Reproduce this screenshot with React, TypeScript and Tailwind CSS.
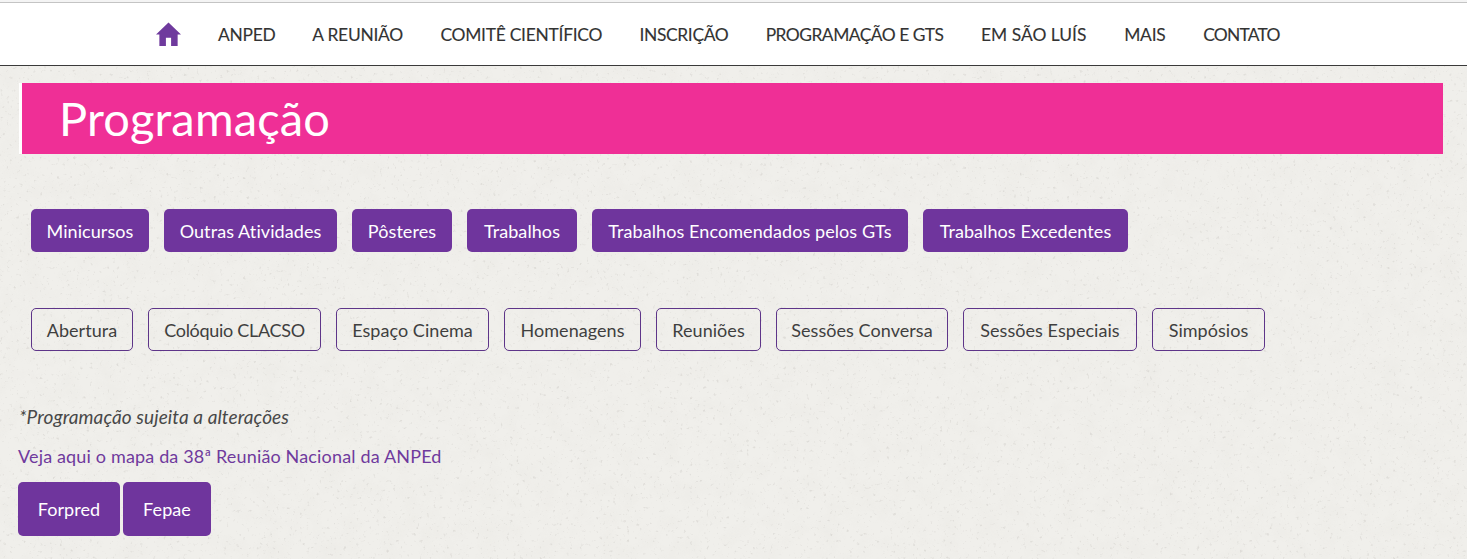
import React from 'react';

const navItems = [
  { label: 'ANPED', cls: 'w-[57px] tracking-[-0.25px]' },
  { label: 'A REUNIÃO', cls: 'w-[91px] tracking-[-0.25px]' },
  { label: 'COMITÊ CIENTÍFICO', cls: 'w-[162px] tracking-[-0.25px]' },
  { label: 'INSCRIÇÃO', cls: 'w-[89px] tracking-[-0.35px]' },
  { label: 'PROGRAMAÇÃO E GTS', cls: 'w-[178px] tracking-[-0.5px]' },
  { label: 'EM SÃO LUÍS', cls: 'w-[106px] tracking-[0px]' },
  { label: 'MAIS', cls: 'w-[42px] tracking-[-0.25px]' },
  { label: 'CONTATO', cls: 'w-[77px] tracking-[-0.75px]' },
];

const solidButtons = [
  { label: 'Minicursos', width: 'w-[118px]' },
  { label: 'Outras Atividades', width: 'w-[173px]' },
  { label: 'Pôsteres', width: 'w-[100px]' },
  { label: 'Trabalhos', width: 'w-[110px]' },
  { label: 'Trabalhos Encomendados pelos GTs', width: 'w-[316px]' },
  { label: 'Trabalhos Excedentes', width: 'w-[205px]' },
];

const outlineButtons = [
  { label: 'Abertura', cls: 'w-[102px] tracking-[0.05px]' },
  { label: 'Colóquio CLACSO', cls: 'w-[173px] tracking-[-0.3px]' },
  { label: 'Espaço Cinema', cls: 'w-[153px] tracking-[0.05px]' },
  { label: 'Homenagens', cls: 'w-[137px] tracking-[0.05px]' },
  { label: 'Reuniões', cls: 'w-[105px] tracking-[0.05px]' },
  { label: 'Sessões Conversa', cls: 'w-[172px] tracking-[0.05px]' },
  { label: 'Sessões Especiais', cls: 'w-[174px] tracking-[0.05px]' },
  { label: 'Simpósios', cls: 'w-[113px] tracking-[0.05px]' },
];

// paper grain behind the page: soft blotches plus sparse specks
function Paper() {
  return (
    <svg className="absolute inset-0 h-full w-full" aria-hidden="true">
      <filter id="blotch">
        <feTurbulence type="fractalNoise" baseFrequency="0.05" numOctaves="3" seed="4" />
        <feColorMatrix values="0 0 0 0 0.70  0 0 0 0 0.68  0 0 0 0 0.64  0 0 0 1.4 -0.55" />
      </filter>
      <filter id="specks">
        <feTurbulence type="fractalNoise" baseFrequency="0.3" numOctaves="2" seed="11" />
        <feColorMatrix values="0 0 0 0 0.5  0 0 0 0 0.48  0 0 0 0 0.45  0 0 0 5 -3.25" />
      </filter>
      <rect width="100%" height="100%" filter="url(#blotch)" opacity="0.16" />
      <rect width="100%" height="100%" filter="url(#specks)" opacity="0.3" />
    </svg>
  );
}

export default function App() {
  return (
    <div className="relative h-[559px] w-[1467px] overflow-hidden bg-[#f0efeb] font-['Lato',sans-serif] text-[18px] text-[#3f3f3f]">
      <Paper />
      <div className="relative">
        <div className="h-[2px] bg-[#f4f4f4]" />
        <header className="flex h-[64px] items-center border-t border-b border-t-[#c4c4c4] border-b-[#3a3a3a] bg-white pl-[156px]">
          <svg viewBox="0 0 26 25" className="mr-[37px] h-[25px] w-[25px] fill-[#6f3a9d]">
            <path d="M13 0 L26 12.5 L22.5 12.5 L22.5 24.5 L15.7 24.5 L15.7 16 L10.3 16 L10.3 24.5 L3.5 24.5 L3.5 12.5 L0 12.5 Z" />
          </svg>
          <nav className="flex gap-[37.15px] pt-[2px]">
            {navItems.map(item => (
              <a key={item.label} className={`${item.cls} whitespace-nowrap text-center text-[17.4px] text-[#333] [-webkit-text-stroke:0.12px_#333]`}>
                {item.label}
              </a>
            ))}
          </nav>
        </header>

        <div className="ml-[19px] mt-[17px] mr-[24px] border-l-[3px] border-white">
          <h1 className="flex h-[71px] items-center bg-[#ef2f96] pl-[37px] text-[47px] leading-none tracking-[0.15px] text-white">Programação</h1>
        </div>

        <div className="ml-[31px] mt-[55px] flex gap-[15px]">
          {solidButtons.map(btn => (
            <a key={btn.label} className={`${btn.width} flex h-[43px] items-center justify-center whitespace-nowrap rounded-[5px] bg-[#6f359d] pt-[1px] tracking-[0.08px] text-white`}>
              {btn.label}
            </a>
          ))}
        </div>

        <div className="ml-[31px] mt-[56px] flex gap-[15px]">
          {outlineButtons.map(btn => (
            <a key={btn.label} className={`${btn.cls} flex h-[43px] items-center justify-center whitespace-nowrap rounded-[5px] border border-[#5e3589] pt-[1px]`}>
              {btn.label}
            </a>
          ))}
        </div>

        <p className="ml-[19px] mt-[53px] text-[19px] leading-[26px] italic tracking-[0.1px] text-[#484848]">*Programação sujeita a alterações</p>
        <a className="ml-[18px] mt-[13px] block leading-[26px] tracking-[0.16px] text-[#6f3a9d]">Veja aqui o mapa da 38ª Reunião Nacional da ANPEd</a>

        <div className="ml-[18px] mt-[13px] flex gap-[3px]">
          <a className="flex h-[54px] w-[102px] items-center justify-center rounded-[5px] bg-[#6f359d] tracking-[0.08px] text-white">Forpred</a>
          <a className="flex h-[54px] w-[88px] items-center justify-center rounded-[5px] bg-[#6f359d] tracking-[0.08px] text-white">Fepae</a>
        </div>
      </div>
    </div>
  );
}
